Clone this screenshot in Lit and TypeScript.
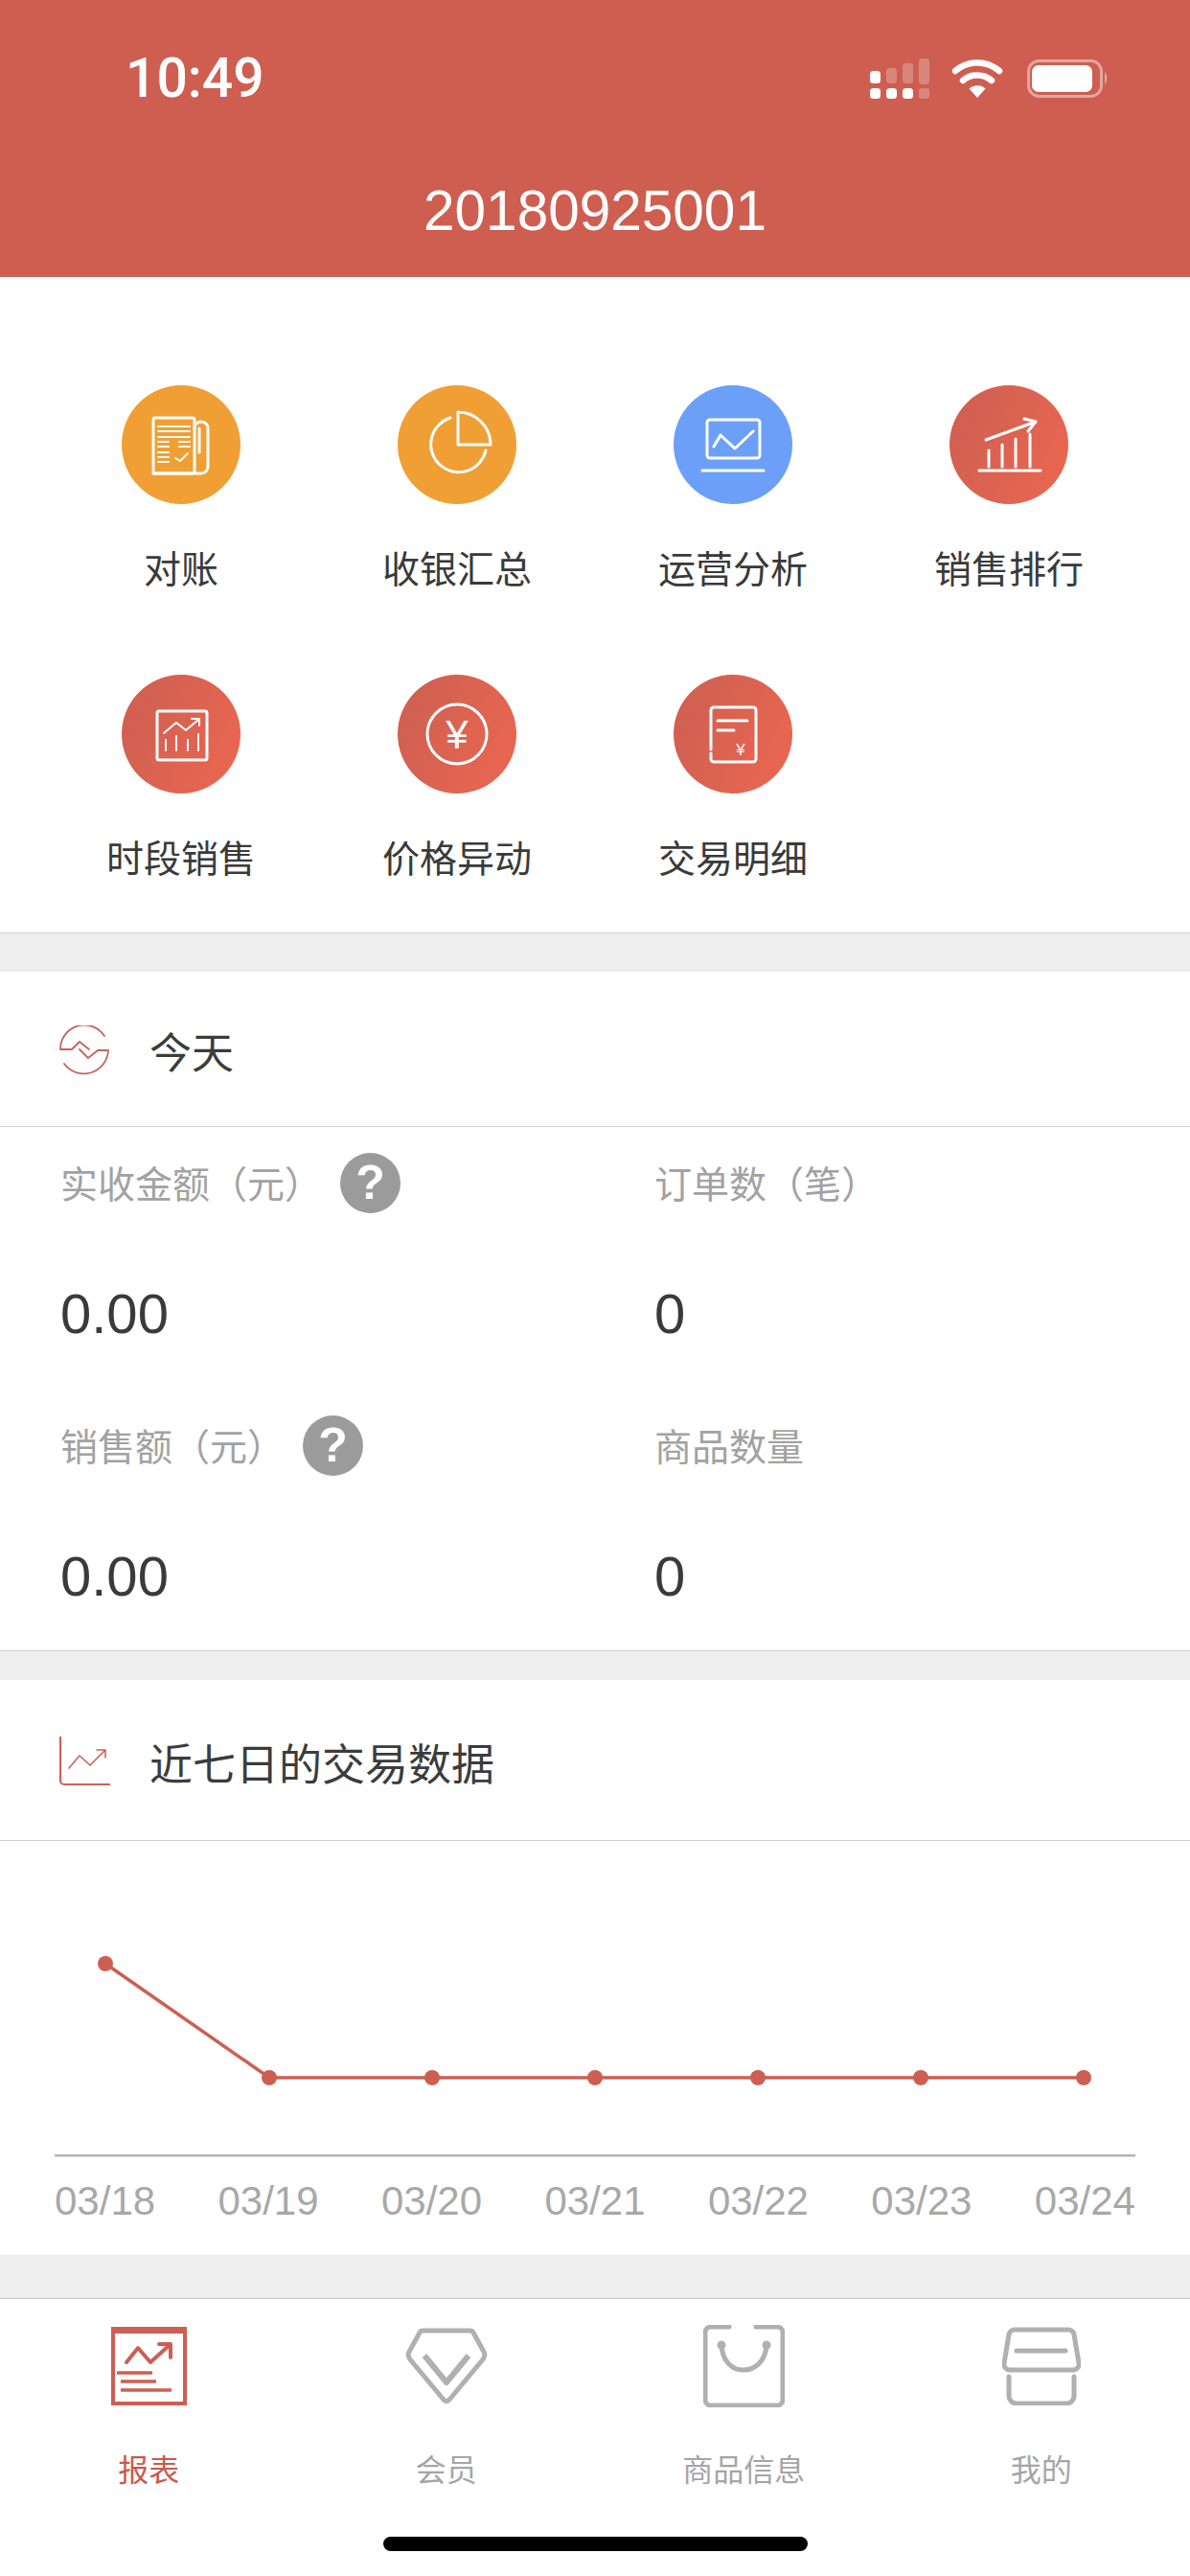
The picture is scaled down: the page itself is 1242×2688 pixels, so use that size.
import { LitElement, html, css, svg } from "lit";
import { customElement } from "lit/decorators.js";

const ICONS: Record<string, unknown> = {
  check: svg`
    <rect x="33" y="34" width="43" height="58" rx="2"/>
    <path d="M76 45a7 7 0 0 1 14 0V85a7 7 0 0 1-7 7H33M81 45V70"/>
    <path class="thin" d="M38 43H71M38 48H71M38 54H71M38 59H49M60 59H71M38 64H49M60 64H71M38 70H49M38 75H49M38 80H49M56 76L61 79L69 71"/>`,
  pie: svg`
    <path d="M55 34A29 29 0 1 0 92 68"/>
    <path d="M63 28V62H97A34 34 0 0 0 63 28Z"/>`,
  screen: svg`
    <rect x="35" y="36" width="55" height="40" rx="3"/>
    <path d="M42 64L49 52L64 66L83 48M30 89H94"/>`,
  bars: svg`
    <path d="M31 89H95M41 68V85M55 62V85M69 56V85M84 51V85M38 57L90 38M78 35L90 38L82 48"/>`,
  board: svg`
    <rect x="37" y="38" width="52" height="51" rx="2"/>
    <path class="thin" d="M44 61L57 50L67 58L80 47M73 46L81 46L81 53M46 68V79M57 64V79M69 68V79M80 62V79"/>`,
  yen: svg`
    <circle cx="62" cy="62" r="31"/>
    <text class="yen" x="62" y="77" font-size="42" text-anchor="middle">¥</text>`,
  receipt: svg`
    <path d="M39 78V37a3 3 0 0 1 3-3H83a3 3 0 0 1 3 3V88a3 3 0 0 1-3 3H42a3 3 0 0 1-3-3V82"/>
    <path d="M46 48H77M46 58H63"/>
    <text class="yen" x="70" y="84" font-size="17" text-anchor="middle">¥</text>`,
};

const MENU = [
  { label: "对账", color: "orange", icon: "check" },
  { label: "收银汇总", color: "orange", icon: "pie" },
  { label: "运营分析", color: "blue", icon: "screen" },
  { label: "销售排行", color: "red", icon: "bars" },
  { label: "时段销售", color: "red", icon: "board" },
  { label: "价格异动", color: "red", icon: "yen" },
  { label: "交易明细", color: "red", icon: "receipt" },
];

const STATS = [
  { label: "实收金额（元）", value: "0.00", help: true },
  { label: "订单数（笔）", value: "0", help: false },
  { label: "销售额（元）", value: "0.00", help: true },
  { label: "商品数量", value: "0", help: false },
];

const DAYS = ["03/18", "03/19", "03/20", "03/21", "03/22", "03/23", "03/24"];
const POINTS = [
  [110, 128],
  [281, 247],
  [451, 247],
  [621, 247],
  [791, 247],
  [961, 247],
  [1131, 247],
];

@customElement("app-root")
export class AppRoot extends LitElement {
  static styles = css`
    :host {
      display: block;
      width: 1242px;
      height: 2688px;
      overflow: hidden;
      background: #fff;
      font-family: "Liberation Sans", "Noto Sans CJK SC", sans-serif;
    }
    .header {
      box-sizing: border-box;
      height: 289px;
      background: #ce5e50;
      color: #fff;
      display: flex;
      flex-direction: column;
      padding-top: 52px;
    }
    .status {
      display: flex;
      justify-content: space-between;
      align-items: center;
      height: 60px;
      padding: 0 84px 0 131px;
    }
    .time {
      font-family: Roboto, "Liberation Sans", sans-serif;
      font-weight: 500;
      font-size: 57px;
      line-height: 60px;
    }
    .status svg {
      display: block;
    }
    .title {
      margin-top: 73px;
      text-align: center;
      font-size: 58.500px;
      line-height: 70px;
    }
    .menu {
      display: grid;
      grid-template-columns: repeat(4, 288px);
      row-gap: 84px;
      padding: 113px 45px 51px;
      border-bottom: 1px solid #d4d4d4;
    }
    .item {
      display: flex;
      flex-direction: column;
      align-items: center;
      gap: 44px;
    }
    .circle {
      width: 124px;
      height: 124px;
      border-radius: 50%;
      display: block;
    }
    .orange {
      background: #f09f35;
    }
    .blue {
      background: #6ca0f8;
    }
    .red {
      background: linear-gradient(115deg, #cc5f52, #ec6750);
    }
    .circle path,
    .circle rect,
    .circle circle {
      fill: none;
      stroke: #fff;
      stroke-width: 3;
      stroke-linecap: round;
      stroke-linejoin: round;
    }
    .circle .thin {
      stroke-width: 2;
    }
    .circle .yen {
      fill: #fff;
      font-family: "Liberation Sans", sans-serif;
    }
    .item-label {
      font-size: 39px;
      line-height: 50px;
      color: #3a3a3a;
    }
    .gap {
      background: #eeeeee;
    }
    .gap-a {
      height: 40px;
    }
    .gap-b {
      height: 30px;
    }
    .gap-c {
      height: 45px;
      border-bottom: 1px solid #c4c4c4;
    }
    .head {
      box-sizing: border-box;
      display: flex;
      align-items: center;
      gap: 42px;
      padding: 3px 0 0 62px;
      border-bottom: 1px solid #cfcfcf;
      font-size: 44px;
      color: #3c3c3c;
    }
    .head svg {
      fill: none;
      stroke: #c9625a;
      stroke-linecap: round;
      stroke-linejoin: round;
      flex: none;
    }
    .head-today {
      height: 162px;
    }
    .head-week {
      height: 168px;
      font-size: 45px;
      gap: 41px;
    }
    .stats {
      display: grid;
      grid-template-columns: 620px 1fr;
      row-gap: 77px;
      padding: 28px 0 47px 63px;
      border-bottom: 1px solid #cfcfcf;
    }
    .stat {
      display: flex;
      flex-direction: column;
      gap: 77px;
    }
    .stat-label {
      display: flex;
      align-items: center;
      gap: 19px;
      height: 60px;
      font-size: 39px;
      color: #a2a2a2;
    }
    .stat-text {
      padding-bottom: 3px;
    }
    .help {
      width: 63px;
      height: 63px;
      border-radius: 50%;
      background: #9b9b9b;
      color: #fff;
      font-weight: 700;
      font-size: 50px;
      line-height: 63px;
      text-align: center;
    }
    .stat-value {
      height: 60px;
      line-height: 60px;
      font-size: 58px;
      color: #3a3a3a;
    }
    .chart {
      padding-bottom: 31px;
    }
    .chart svg {
      display: block;
    }
    .days {
      display: flex;
      justify-content: space-between;
      margin-top: 20px;
      padding: 0 57px;
      font-size: 42px;
      line-height: 50px;
      color: #a8a8a8;
    }
    .tabs {
      display: flex;
      padding-top: 25px;
    }
    .tab {
      flex: 1;
      display: flex;
      flex-direction: column;
      align-items: center;
      gap: 42px;
      font-size: 32px;
      line-height: 44px;
      color: #a5a5a5;
    }
    .tab.on {
      color: #c9594c;
    }
    .tab-icon {
      height: 90px;
      display: flex;
      align-items: center;
    }
    .tab-icon svg {
      display: block;
      fill: none;
      stroke: #b0b0b0;
      stroke-linecap: round;
      stroke-linejoin: round;
      stroke-width: 5;
    }
    .tab.on svg {
      stroke: #cd5f52;
    }
    .tab-icon .dot {
      fill: #b0b0b0;
      stroke: none;
    }
    .home {
      width: 443px;
      height: 15px;
      margin: 47px auto 0;
      border-radius: 8px;
      background: #000;
    }
  `;

  private statusIcons() {
    return html`<svg width="250" height="42" viewBox="908 61 250 42">
      <g fill="#fff">
        <rect x="908" y="74" width="11" height="13" rx="3.5" />
        <rect x="908" y="92" width="11" height="11" rx="3.5" />
        <rect x="925" y="92" width="11" height="11" rx="3.5" />
        <rect x="942" y="92" width="11" height="11" rx="3.5" />
      </g>
      <g fill="#fff" opacity="0.25">
        <rect x="925" y="71" width="11" height="16" rx="3.5" />
        <rect x="942" y="66" width="11" height="21" rx="3.5" />
        <rect x="959" y="61" width="11" height="27" rx="3.5" />
        <rect x="959" y="92" width="11" height="11" rx="3" />
      </g>
      <path
        d="M997 74A35 35 0 0 1 1043 74M1005 84A23 23 0 0 1 1035 84"
        fill="none"
        stroke="#fff"
        stroke-width="6.5"
        stroke-linecap="round"
      />
      <path d="M1011.500 92.500A13 13 0 0 1 1028.500 92.500L1020 102Z" fill="#fff" />
      <rect x="1073.500" y="63.500" width="76" height="37" rx="11" fill="none" stroke="#fff" stroke-opacity="0.45" stroke-width="3" />
      <rect x="1077" y="68" width="63" height="28" rx="7" fill="#fff" />
      <path d="M1153 75Q1158 81 1153 88Z" fill="#fff" fill-opacity="0.45" />
    </svg>`;
  }

  private menu() {
    return html`<div class="menu">
      ${MENU.map(
        (m) => html`<div class="item">
          <svg class="circle ${m.color}" viewBox="0 0 124 124">${ICONS[m.icon]}</svg>
          <span class="item-label">${m.label}</span>
        </div>`
      )}
    </div>`;
  }

  private stats() {
    return html`<div class="stats">
      ${STATS.map(
        (s) => html`<div class="stat">
          <div class="stat-label">
            <span class="stat-text">${s.label}</span>
            ${s.help ? html`<span class="help">?</span>` : null}
          </div>
          <div class="stat-value">${s.value}</div>
        </div>`
      )}
    </div>`;
  }

  private chart() {
    const line = POINTS.map((p) => p.join(",")).join(" ");
    return html`<div class="chart">
      <svg width="1242" height="331" viewBox="0 0 1242 331">
        <polyline points=${line} fill="none" stroke="#cd5f52" stroke-width="3.500" />
        ${POINTS.map((p) => svg`<circle cx=${p[0]} cy=${p[1]} r="8" fill="#cd5f52" />`)}
        <rect x="57" y="327" width="1128" height="2.500" fill="#b4b4b4" />
      </svg>
      <div class="days">${DAYS.map((d) => html`<span>${d}</span>`)}</div>
    </div>`;
  }

  private tabs() {
    return html`<div class="tabs">
      <div class="tab on">
        <div class="tab-icon">
          <svg width="79" height="82" viewBox="0 0 79 82">
            <path d="M2 2H77V80H2Z" stroke-width="4" stroke-linejoin="miter" />
            <path d="M2 4H77" stroke-width="6" stroke-linecap="butt" />
            <path d="M16 37L28 22L41 37L62 18M50 18H62V32" stroke-width="4" />
            <path d="M6 48H43M10 57H47M10 66H63" stroke-width="3.500" stroke-linecap="butt" />
          </svg>
        </div>
        <span>报表</span>
      </div>
      <div class="tab">
        <div class="tab-icon">
          <svg width="86" height="80" viewBox="0 0 86 80">
            <path d="M18 3H68Q70 3 71 5L82 25Q84 29 81 33L46 75Q43 78 40 75L5 33Q2 29 4 25L15 5Q16 3 18 3Z" />
            <path d="M20 29L43 57L66 29" stroke-width="6" stroke-linecap="butt" />
          </svg>
        </div>
        <span>会员</span>
      </div>
      <div class="tab">
        <div class="tab-icon">
          <svg width="85" height="86" viewBox="0 0 85 86">
            <path d="M27 2H8a6 6 0 0 0-6 6V78a6 6 0 0 0 6 6H77a6 6 0 0 0 6-6V8a6 6 0 0 0-6-6H55" />
            <path d="M19 21C20 38 30 47 42 47C54 47 65 38 66 21" />
            <circle class="dot" cx="19" cy="21" r="4.500" />
            <circle class="dot" cx="66" cy="21" r="4.500" />
          </svg>
        </div>
        <span>商品信息</span>
      </div>
      <div class="tab">
        <div class="tab-icon">
          <svg width="82" height="82" viewBox="0 0 82 82">
            <path d="M13 3H69a6 6 0 0 1 6 5L80 38a6 6 0 0 1-6 7H8a6 6 0 0 1-6-7L7 8a6 6 0 0 1 6-5Z" />
            <path d="M15 25H66" stroke-width="5" />
            <path d="M7 52V72a8 8 0 0 0 8 8H67a8 8 0 0 0 8-8V52" />
          </svg>
        </div>
        <span>我的</span>
      </div>
    </div>`;
  }

  render() {
    return html`
      <div class="header">
        <div class="status">
          <span class="time">10:49</span>
          ${this.statusIcons()}
        </div>
        <div class="title">20180925001</div>
      </div>
      ${this.menu()}
      <div class="gap gap-a"></div>
      <div class="head head-today">
        <svg width="52" height="52" viewBox="0 0 52 52" stroke-width="1.800">
          <path d="M1 25A25 25 0 0 1 47 11M1 25H13L21 17L31 25M51 26H40L30 34L21 25M51 26A25.500 25.500 0 0 1 5 40" />
        </svg>
        <span>今天</span>
      </div>
      ${this.stats()}
      <div class="gap gap-b"></div>
      <div class="head head-week">
        <svg width="53" height="52" viewBox="0 0 53 52" stroke-width="2">
          <path d="M1 1V46a4 4 0 0 0 4 4H52" stroke-width="2.200" />
          <path d="M10 33L21 20L32 30L48 14M39 14H48V22" stroke-width="1.600" />
        </svg>
        <span>近七日的交易数据</span>
      </div>
      ${this.chart()}
      <div class="gap gap-c"></div>
      ${this.tabs()}
      <div class="home"></div>
    `;
  }
}
